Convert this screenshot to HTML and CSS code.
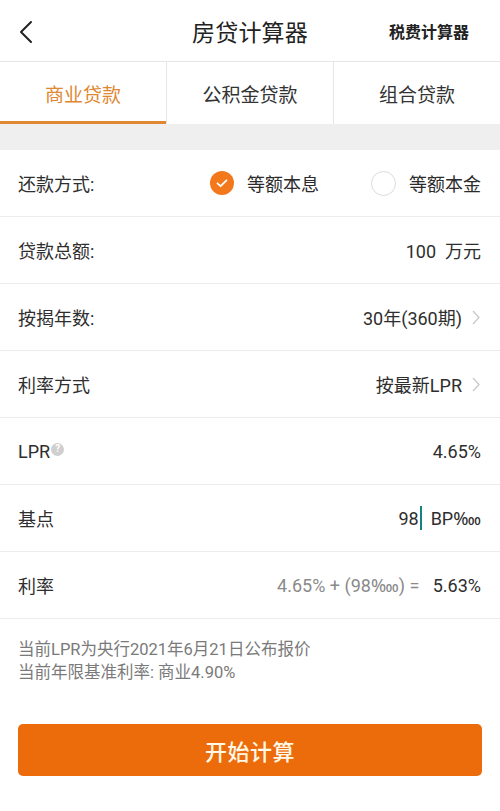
FILE: index.html
```html
<!DOCTYPE html>
<html lang="zh-CN">
<head>
<meta charset="utf-8">
<title>房贷计算器</title>
<link rel="stylesheet" href="styles.css">
</head>
<body>
<div class="page">
  <header class="topbar">
    <div class="back">
      <svg width="16" height="24" viewBox="0 0 16 24"><path d="M13 2 L3 12 L13 22" fill="none" stroke="#222" stroke-width="2" stroke-linecap="round" stroke-linejoin="round"/></svg>
    </div>
    <div class="title">房贷计算器</div>
    <div class="tax">税费计算器</div>
  </header>
  <nav class="tabs">
    <div class="tab active">商业贷款</div>
    <div class="tab">公积金贷款</div>
    <div class="tab">组合贷款</div>
  </nav>
  <div class="band"></div>
  <section class="form">
    <div class="row">
      <div class="label">还款方式:</div>
      <div class="options">
        <div class="option">
          <span class="radio checked">
            <svg width="24" height="24" viewBox="0 0 24 24"><circle cx="12" cy="12" r="12" fill="#f2781b"/><path d="M7.5 12.3 L10.6 15.2 L16.5 9.3" fill="none" stroke="#fff" stroke-width="1.8" stroke-linecap="round" stroke-linejoin="round"/></svg>
          </span>
          <span>等额本息</span>
        </div>
        <div class="option">
          <span class="radio empty"></span>
          <span>等额本金</span>
        </div>
      </div>
    </div>
    <div class="row">
      <div class="label">贷款总额:</div>
      <div class="value">100&nbsp;&nbsp;万元</div>
    </div>
    <div class="row">
      <div class="label">按揭年数:</div>
      <div class="value link">30年(360期)<span class="chev"><svg width="8" height="15" viewBox="0 0 8 15"><path d="M1 1 L7 7.5 L1 14" fill="none" stroke="#c9c9c9" stroke-width="1.3"/></svg></span></div>
    </div>
    <div class="row">
      <div class="label">利率方式</div>
      <div class="value link">按最新LPR<span class="chev"><svg width="8" height="15" viewBox="0 0 8 15"><path d="M1 1 L7 7.5 L1 14" fill="none" stroke="#c9c9c9" stroke-width="1.3"/></svg></span></div>
    </div>
    <div class="row">
      <div class="label">LPR<span class="help">?</span></div>
      <div class="value">4.65%</div>
    </div>
    <div class="row">
      <div class="label">基点</div>
      <div class="value">98<span class="cursor"></span>&nbsp;&nbsp;BP‱</div>
    </div>
    <div class="row">
      <div class="label">利率</div>
      <div class="value"><span class="muted">4.65% + (98‱) =</span>&nbsp;&nbsp; 5.63%</div>
    </div>
  </section>
  <section class="note">
    <p>当前LPR为央行2021年6月21日公布报价</p>
    <p>当前年限基准利率: 商业4.90%</p>
  </section>
  <div class="action">
    <button class="start">开始计算</button>
  </div>
</div>
</body>
</html>
```
FILE: styles.css
```css
html, body {
  margin: 0;
  padding: 0;
  background: #ffffff;
}
body {
  font-family: "Roboto", "Noto Sans CJK SC", "Noto Sans", sans-serif;
  color: #2b2b2b;
}
.page {
  width: 500px;
  height: 811px;
  overflow: hidden;
  display: flex;
  flex-direction: column;
}
.topbar {
  height: 61px;
  border-bottom: 1px solid #e6e6e6;
  display: grid;
  grid-template-columns: 1fr auto 1fr;
  align-items: center;
}
.back {
  padding-left: 18px;
  display: flex;
  align-items: center;
  padding-top: 2px;
}
.title {
  font-size: 23px;
  color: #222;
  letter-spacing: 0.2px;
}
.tax {
  justify-self: end;
  padding-right: 31px;
  font-size: 16px;
  font-weight: 700;
  color: #222;
}
.tabs {
  height: 62px;
  display: grid;
  grid-template-columns: 166px 167px 167px;
}
.tab {
  display: flex;
  align-items: center;
  justify-content: center;
  font-size: 19px;
  color: #333;
  border-left: 1px solid #e6e6e6;
  box-sizing: border-box;
}
.tab:first-child {
  border-left: none;
}
.tab.active {
  color: #e08733;
  border-bottom: 3px solid #e08733;
  padding-top: 3px;
}
.band {
  height: 26px;
  background: #efefef;
}
.row {
  height: 66px;
  border-bottom: 1px solid #ececec;
  display: flex;
  align-items: center;
  justify-content: space-between;
  padding: 0 19px 0 18px;
  font-size: 18px;
}
.label {
  color: #2e2e2e;
  display: flex;
  align-items: center;
}
.options {
  display: flex;
  align-items: center;
  gap: 52px;
}
.option {
  display: flex;
  align-items: center;
  gap: 13px;
}
.radio {
  width: 24px;
  height: 24px;
  display: inline-flex;
}
.radio.empty {
  box-sizing: border-box;
  border: 1.5px solid #dcdcdc;
  border-radius: 50%;
  width: 25px;
  height: 25px;
}
.value {
  display: flex;
  align-items: center;
  color: #2e2e2e;
}
.value.link {
  margin-right: 1px;
}
.chev {
  display: inline-flex;
  margin-left: 10px;
}
.help {
  display: inline-flex;
  width: 13px;
  height: 13px;
  border-radius: 50%;
  background: #cfcfcf;
  color: #fff;
  font-size: 10px;
  font-weight: 700;
  align-items: center;
  justify-content: center;
  margin-left: 1px;
  margin-top: -4px;
  line-height: 1;
}
.cursor {
  display: inline-block;
  width: 2px;
  height: 24px;
  background: #15847f;
  margin-left: 1px;
}
.muted {
  color: #8a8a8a;
}
.note {
  padding: 19px 18px 0;
  font-size: 16.5px;
  line-height: 23px;
  color: #7a7a7a;
}
.note p {
  margin: 0;
}
.action {
  padding: 40px 18px 0;
}
.start {
  width: 100%;
  height: 52px;
  border: none;
  border-radius: 5px;
  background: #ec6c0b;
  color: #fff8e6;
  font-family: "Noto Sans CJK SC", "Noto Sans", sans-serif;
  font-size: 22px;
  font-weight: 500;
  letter-spacing: 0.5px;
  padding: 0;
}
```
